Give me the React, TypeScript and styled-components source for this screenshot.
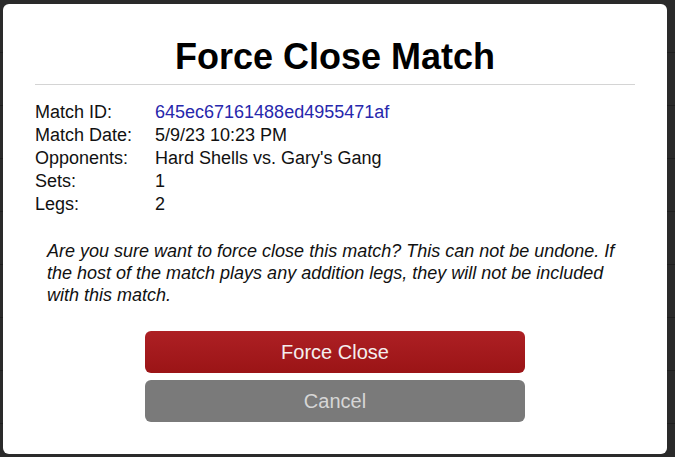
import { Fragment } from "react";
import styled, { createGlobalStyle } from "styled-components";

const GlobalStyle = createGlobalStyle`
  html, body {
    margin: 0;
    padding: 0;
    background: #262626;
    font-family: "Liberation Sans", Arial, sans-serif;
  }
`;

const Backdrop = styled.div`
  width: 675px;
  height: 457px;
  padding: 4px 0 0 3px;
  box-sizing: border-box;
  background: repeating-linear-gradient(
    to bottom,
    #2a2a2a 0px,
    #2a2a2a 52px,
    #1f1f1f 52px,
    #1f1f1f 53px
  );
`;

const Modal = styled.div`
  width: 664px;
  box-sizing: border-box;
  padding: 32px;
  background: #ffffff;
  border-radius: 6px;
  color: #111111;
`;

const Title = styled.h1`
  margin: 0;
  font-size: 36px;
  line-height: 41px;
  font-weight: bold;
  text-align: center;
  color: #000000;
`;

const Divider = styled.hr`
  margin: 7px 0 16px;
  border: 0;
  border-top: 1px solid #d4d4d4;
`;

const Details = styled.div`
  display: grid;
  grid-template-columns: 120px 1fr;
  font-size: 18px;
  line-height: 23px;
`;

const Label = styled.span`
  color: #111111;
`;

const Value = styled.span<{ $link?: boolean }>`
  color: ${({ $link }) => ($link ? "#2727ac" : "#111111")};
`;

const Warning = styled.p`
  margin: 24px 8px 25px 12px;
  font-size: 18px;
  line-height: 22px;
  font-style: italic;
  color: #111111;
`;

const Actions = styled.div`
  display: flex;
  flex-direction: column;
  align-items: center;
  gap: 7px;
`;

const Button = styled.button<{ $variant: "danger" | "muted" }>`
  width: 380px;
  height: 42px;
  border: 0;
  border-radius: 6px;
  font-family: inherit;
  font-size: 20px;
  cursor: pointer;
  color: ${({ $variant }) => ($variant === "danger" ? "#f4eeee" : "#d6d6d6")};
  background: ${({ $variant }) =>
    $variant === "danger"
      ? "linear-gradient(to bottom, #ad2024, #9b1416)"
      : "#7a7a7a"};
`;

const rows: { label: string; value: string; link?: boolean }[] = [
  { label: "Match ID:", value: "645ec67161488ed4955471af", link: true },
  { label: "Match Date:", value: "5/9/23 10:23 PM" },
  { label: "Opponents:", value: "Hard Shells vs. Gary's Gang" },
  { label: "Sets:", value: "1" },
  { label: "Legs:", value: "2" },
];

export default function App() {
  return (
    <>
      <GlobalStyle />
      <Backdrop>
        <Modal>
          <Title>Force Close Match</Title>
          <Divider />
          <Details>
            {rows.map((row) => (
              <Fragment key={row.label}>
                <Label>{row.label}</Label>
                <Value $link={row.link}>{row.value}</Value>
              </Fragment>
            ))}
          </Details>
          <Warning>
            Are you sure want to force close this match? This can not be
            undone. If the host of the match plays any addition legs, they will
            not be included with this match.
          </Warning>
          <Actions>
            <Button $variant="danger">Force Close</Button>
            <Button $variant="muted">Cancel</Button>
          </Actions>
        </Modal>
      </Backdrop>
    </>
  );
}
